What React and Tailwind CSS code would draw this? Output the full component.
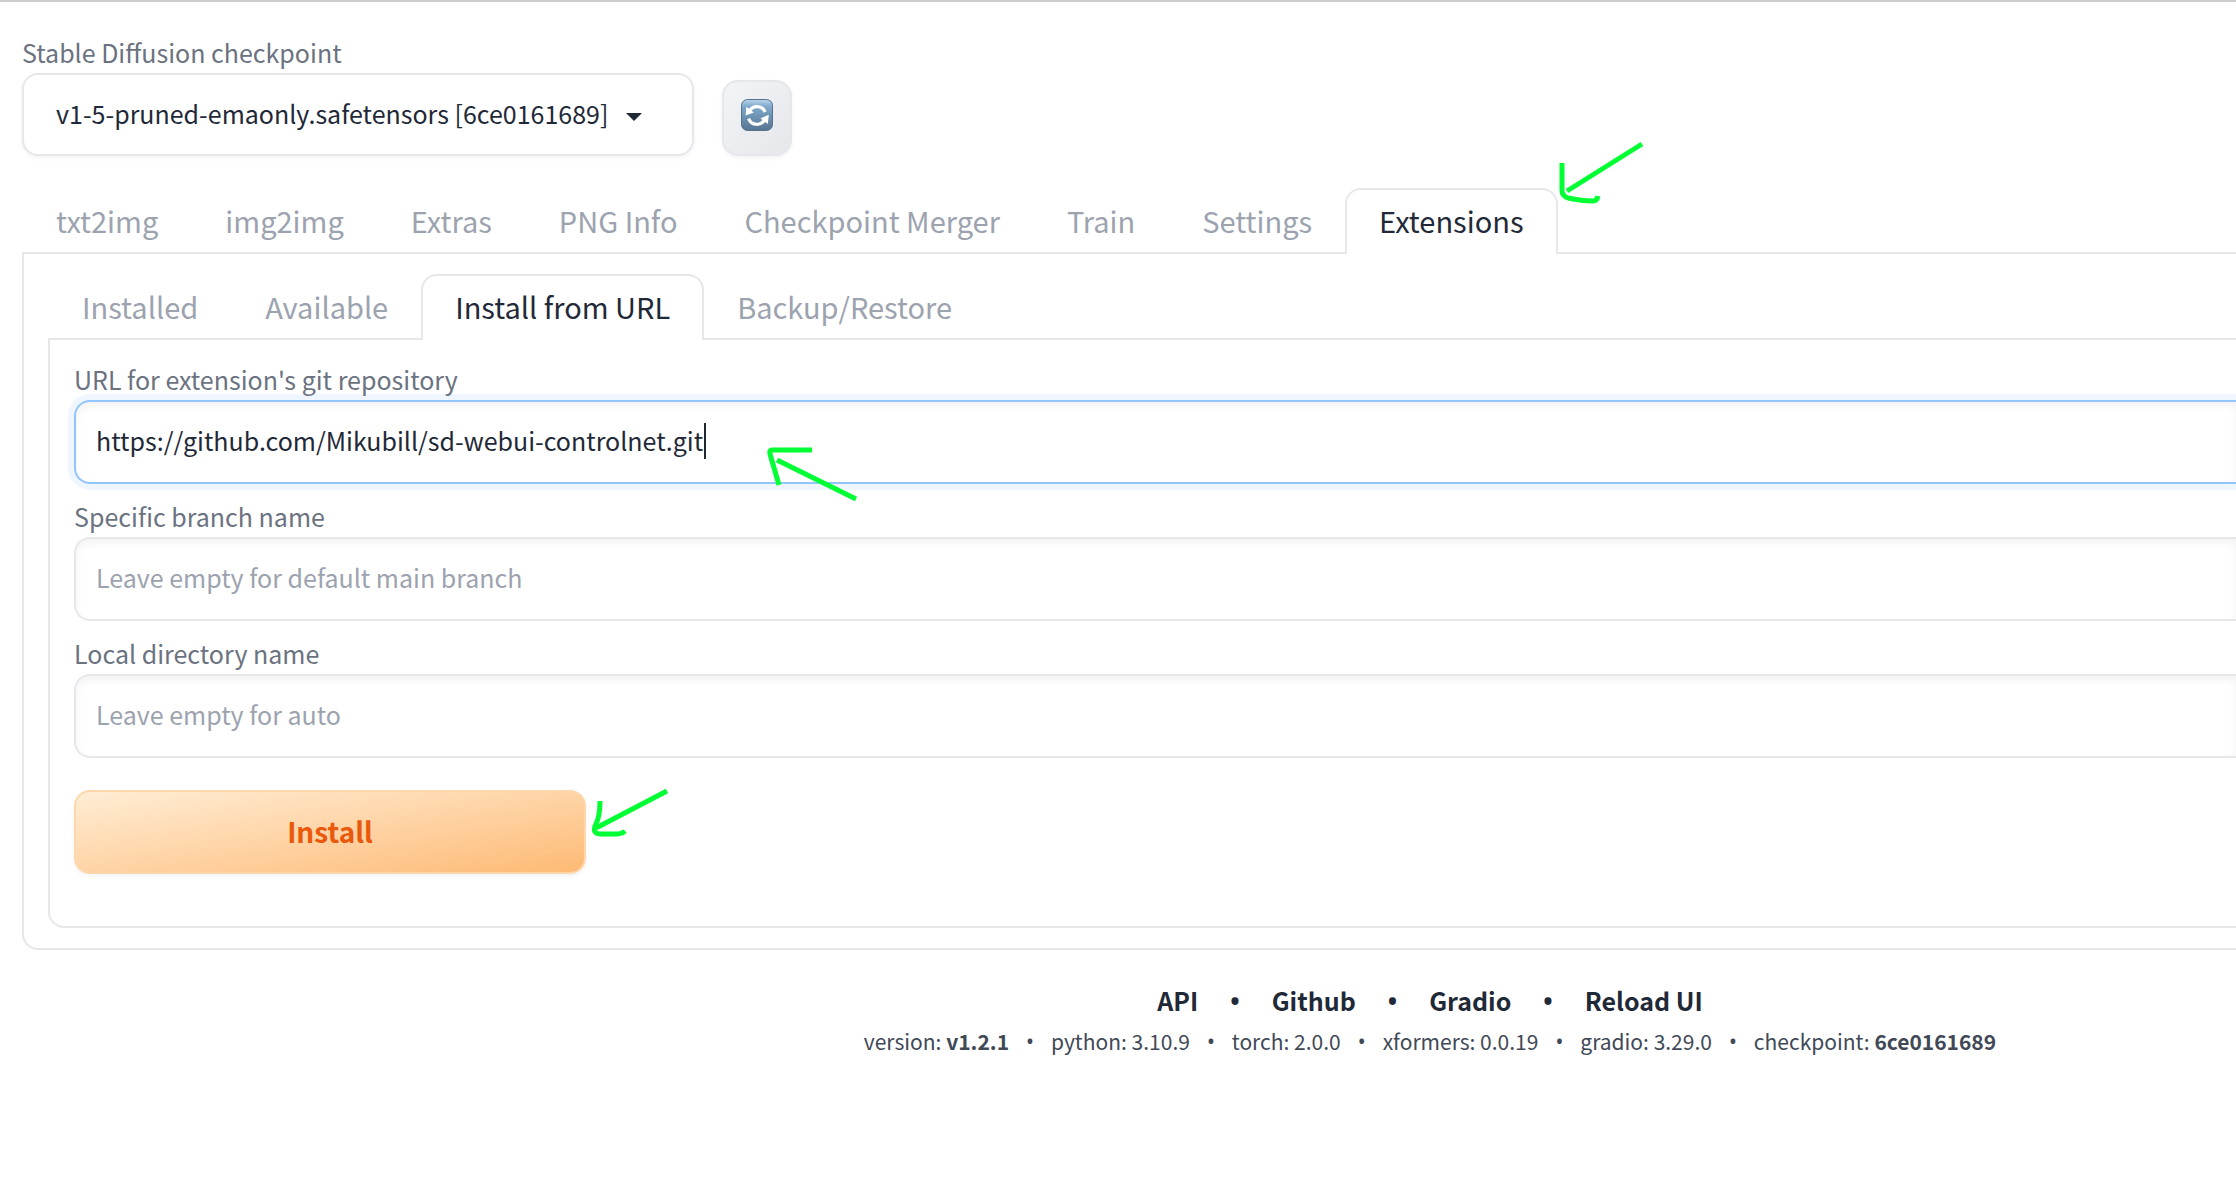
const MAIN_TABS = ['txt2img', 'img2img', 'Extras', 'PNG Info', 'Checkpoint Merger', 'Train', 'Settings', 'Extensions'];
const EXTENSION_TABS = ['Installed', 'Available', 'Install from URL', 'Backup/Restore'];
const LINKS = ['API', 'Github', 'Gradio', 'Reload UI'];
const VERSIONS = [
  ['version:', 'v1.2.1', true],
  ['python:', '3.10.9', false],
  ['torch:', '2.0.0', false],
  ['xformers:', '0.0.19', false],
  ['gradio:', '3.29.0', false],
  ['checkpoint:', '6ce0161689', true],
];

function Tabs({ items, active, label }) {
  return (
    <div role="tablist" aria-label={label} className="flex">
      {items.map((item) => (
        <button
          key={item}
          type="button"
          role="tab"
          aria-selected={item === active}
          className={
            item === active
              ? 'relative -mb-0.5 h-[66px] rounded-t-2xl border-2 border-b-0 border-[#e5e7eb] bg-white px-8 pb-1 text-[29px] leading-[60px] whitespace-nowrap text-[#1f2937] not-first:-ml-px'
              : 'h-16 border-2 border-b-0 border-transparent px-8 pb-0.5 text-[29px] leading-[60px] whitespace-nowrap text-[#9ca3af] not-first:-ml-px'
          }
        >
          {item}
        </button>
      ))}
    </div>
  );
}

function Field({ id, label, focused, ...props }) {
  return (
    <div>
      <label htmlFor={id} className="relative z-10 mb-px block text-[25px] leading-10 text-[#6b7280]">
        {label}
      </label>
      <div className="relative">
        <input
          id={id}
          type="text"
          className={
            focused
              ? 'block h-[84px] w-full rounded-l-2xl border-2 border-r-0 border-[#93c5fd] bg-white px-5 pb-1 text-[25px] text-[#1f2937] shadow-[0_0_0_6px_#eff6ff,inset_0_4px_8px_rgba(0,0,0,0.05)] outline-none'
              : 'block h-[84px] w-full rounded-l-2xl border-2 border-r-0 border-[#e5e7eb] bg-white px-5 pb-1 text-[25px] text-[#1f2937] shadow-[inset_0_4px_8px_rgba(0,0,0,0.05)] outline-none placeholder:text-[#9ca3af]'
          }
          {...props}
        />
        {focused && <span className="absolute top-[23px] left-[630px] h-9 w-0.5 bg-[#1f2937]" />}
      </div>
    </div>
  );
}

function RefreshIcon() {
  return (
    <svg viewBox="0 0 32 32" className="mb-1.5 size-8" aria-hidden="true">
      <defs>
        <linearGradient id="tile" x1="0" y1="0" x2="0" y2="1">
          <stop offset="0" stopColor="#b9d6ea" />
          <stop offset="0.22" stopColor="#81a9cb" />
          <stop offset="0.6" stopColor="#6a8fb0" />
          <stop offset="1" stopColor="#577591" />
        </linearGradient>
      </defs>
      <rect x="0.5" y="0.5" width="31" height="31" rx="6" fill="url(#tile)" stroke="#55728d" />
      <path d="M8.2 12.6A8.8 8.8 0 0 1 24.2 13" fill="none" stroke="#fff" strokeWidth="3.2" />
      <path d="M4.6 16.6L5.4 7.8L12.8 13.4Z" fill="#fff" />
      <path d="M23.8 20.2A8.8 8.8 0 0 1 7.6 19.6" fill="none" stroke="#fff" strokeWidth="3.2" />
      <path d="M27.8 15.8L26.8 25L19.4 19.4Z" fill="#fff" />
    </svg>
  );
}

function Bullet() {
  return <span className="font-['Noto_Sans',sans-serif]">•</span>;
}

function Arrow({ className, viewBox, paths }) {
  return (
    <svg viewBox={viewBox} className={className} fill="none" stroke="#00ff33" strokeWidth="5" strokeLinejoin="round" aria-hidden="true">
      {paths.map((d) => (
        <path key={d} d={d} />
      ))}
    </svg>
  );
}

export default function App() {
  return (
    <div
      lang="en"
      className="relative min-h-screen overflow-hidden border-t-2 border-[#cccccc] bg-white pt-[30px] pl-[22px] font-['Noto_Sans_CJK_SC','Source_Sans_Pro',sans-serif] text-[#1f2937]"
    >
      <div className="flex items-end gap-7">
        <div className="w-[672px]">
          <label htmlFor="checkpoint" className="mb-px block text-[25px] leading-10 text-[#6b7280]">
            Stable Diffusion checkpoint
          </label>
          <div className="relative">
            <select
              id="checkpoint"
              className="block h-[83px] w-full appearance-none rounded-2xl border-2 border-[#e5e7eb] bg-white px-8 pb-0.5 text-[25px] text-[#1f2937] shadow-[0_2px_4px_rgba(0,0,0,0.05)] outline-none"
            >
              <option>v1-5-pruned-emaonly.safetensors [6ce0161689]</option>
            </select>
            <svg viewBox="0 0 16 8" className="pointer-events-none absolute top-10 right-[52px] h-2 w-4" aria-hidden="true">
              <path d="M0 0H16L8 8Z" fill="#1f2937" />
            </svg>
          </div>
        </div>
        <button
          type="button"
          aria-label="Refresh checkpoints"
          className="flex h-[76px] w-[70px] items-center justify-center rounded-2xl border-2 border-[#e5e7eb] bg-linear-to-br from-[#f3f4f6] to-[#e5e7eb] shadow-[0_2px_4px_rgba(0,0,0,0.05)]"
        >
          <RefreshIcon />
        </button>
      </div>

      <main className="mt-8">
        <Tabs items={MAIN_TABS} active="Extensions" label="Main" />
        <section className="rounded-bl-2xl border-2 border-r-0 border-[#e5e7eb] py-5 pl-6">
          <Tabs items={EXTENSION_TABS} active="Install from URL" label="Extensions" />
          <form
            className="rounded-bl-2xl border-2 border-r-0 border-[#e5e7eb] pt-[19px] pb-[52px] pl-6"
            onSubmit={(e) => e.preventDefault()}
          >
            <div className="flex flex-col gap-3">
              <Field
                id="url"
                label="URL for extension's git repository"
                focused
                defaultValue="https://github.com/Mikubill/sd-webui-controlnet.git"
              />
              <Field id="branch" label="Specific branch name" placeholder="Leave empty for default main branch" />
              <Field id="directory" label="Local directory name" placeholder="Leave empty for auto" />
            </div>
            <button
              type="submit"
              className="mt-8 block h-[84px] w-[512px] rounded-2xl border-2 border-[#fed7aa] bg-linear-to-br from-[#ffedd5] to-[#fdba74] pb-0.5 text-[28px] leading-[78px] font-bold text-[#ea580c] shadow-[0_2px_4px_rgba(0,0,0,0.05)]"
            >
              Install
            </button>
          </form>
        </section>
      </main>

      <footer className="mt-[30px] pl-[602px]">
        <nav className="flex justify-center gap-8 text-[25px] leading-10 font-bold">
          {LINKS.map((link, i) => (
            <span key={link} className="flex gap-8">
              {i > 0 && <Bullet />}
              <a href="#">{link}</a>
            </span>
          ))}
        </nav>
        <div className="mt-px flex justify-center gap-[17px] text-[21px] leading-10 whitespace-nowrap text-[#414957]">
          {VERSIONS.map(([name, value, strong], i) => (
            <span key={name} className="flex gap-[17px]">
              {i > 0 && <Bullet />}
              <span>
                {name} {strong ? <b>{value}</b> : value}
              </span>
            </span>
          ))}
        </div>
      </footer>

      <Arrow
        className="pointer-events-none absolute top-32 left-[1540px] h-[90px] w-[120px]"
        viewBox="0 0 120 90"
        paths={['M22 33V60Q22 66 28 68Q42 71 53 71Q57 71 58 66', 'M102 14L27 61']}
      />
      <Arrow
        className="pointer-events-none absolute top-[408px] left-[690px] h-[100px] w-[180px]"
        viewBox="0 0 180 100"
        paths={['M122 40H82Q79 40 80 44L89 75', 'M87 50L166 89']}
      />
      <Arrow
        className="pointer-events-none absolute top-[768px] left-[570px] h-[90px] w-[120px]"
        viewBox="0 0 120 90"
        paths={['M30 31Q30 46 26 54Q21 64 31 64H46Q52 64 55 61', 'M97 21L26 58']}
      />
    </div>
  );
}
